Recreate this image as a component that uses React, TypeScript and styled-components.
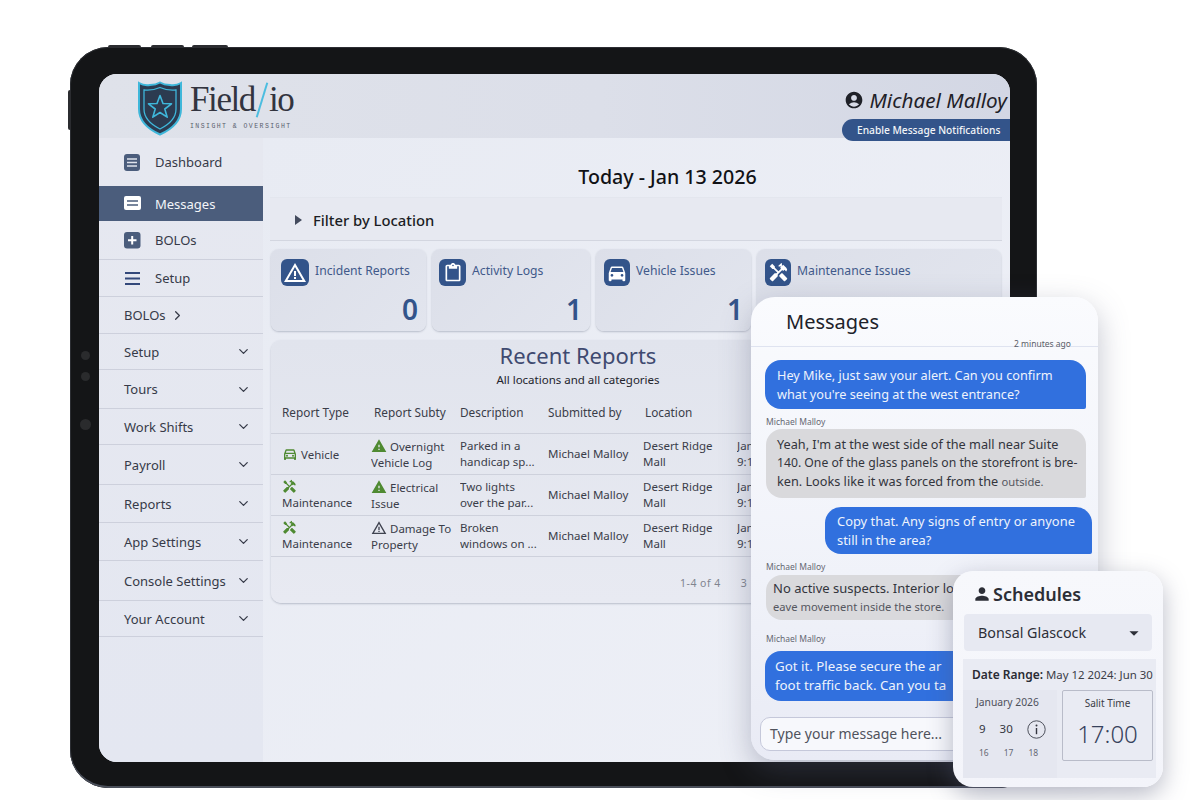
import styled, { createGlobalStyle } from "styled-components";
import { ChevronDown, ChevronRight } from "lucide-react";
import {
  MdAccountCircle,
  MdArrowDropDown,
  MdContentPaste,
  MdDirectionsCar,
  MdHandyman,
  MdOutlineDirectionsCar,
  MdPerson,
  MdWarning,
  MdWarningAmber,
} from "react-icons/md";

const FONT = `"Noto Sans", "Open Sans", sans-serif`;

const GlobalStyle = createGlobalStyle`
  html, body {
    margin: 0;
    background: #fff;
    font-family: ${FONT};
  }
  * { box-sizing: border-box; }
`;

const Stage = styled.div`
  position: relative;
  width: 1200px;
  height: 800px;
  padding: 47px 0 0 70px;
  overflow: hidden;
  background: #fff;
`;

const Tablet = styled.div`
  position: relative;
  width: 967px;
  height: 741px;
  padding: 27px 27px 26px 29px;
  border-radius: 38px;
  background: #141517;
  box-shadow: inset 0 -2px 0 #4a4f5a, inset 0 0 0 1px #2c2e33;
`;

const TopButton = styled.span<{ $left: number; $width: number }>`
  position: absolute;
  top: -2px;
  left: ${({ $left }) => $left}px;
  width: ${({ $width }) => $width}px;
  height: 3px;
  border-radius: 2px 2px 0 0;
  background: #2b2c30;
`;

const SideButton = styled.span`
  position: absolute;
  top: 43px;
  left: -2px;
  width: 3px;
  height: 40px;
  border-radius: 2px 0 0 2px;
  background: #2b2c30;
`;

const Lens = styled.span<{ $top: number; $size: number }>`
  position: absolute;
  top: ${({ $top }) => $top}px;
  left: 15px;
  width: ${({ $size }) => $size}px;
  height: ${({ $size }) => $size}px;
  margin-left: ${({ $size }) => -$size / 2}px;
  border-radius: 50%;
  background: #2a2b2d;
`;

const Screen = styled.div`
  display: flex;
  flex-direction: column;
  width: 911px;
  height: 688px;
  border-radius: 18px;
  overflow: hidden;
  background: #eceef6;
`;

const Header = styled.header`
  display: flex;
  justify-content: space-between;
  height: 64px;
  flex-shrink: 0;
  background: linear-gradient(90deg, #dfe2ea 0%, #dcdfe9 55%, #d3d7e4 100%);
`;

const Brand = styled.div`
  display: flex;
  gap: 7px;
  padding: 7px 0 0 38px;
`;

const BrandText = styled.div`
  display: flex;
  flex-direction: column;
`;

const Wordmark = styled.div`
  display: flex;
  align-items: center;
  height: 38px;
  font-family: "Liberation Serif", serif;
  font-size: 35px;
  line-height: 38px;
  letter-spacing: -1.4px;
  color: #32343f;
`;

const Slash = styled.span`
  display: block;
  width: 2px;
  height: 36px;
  margin: 0 6px 0 6px;
  background: #4cbde0;
  transform: rotate(17deg);
`;

const Tagline = styled.div`
  margin-top: 3px;
  font-family: "Liberation Mono", monospace;
  font-size: 6.5px;
  line-height: 9px;
  letter-spacing: 1.45px;
  color: #5a5f6e;
  white-space: nowrap;
`;

const Account = styled.div`
  display: flex;
  flex-direction: column;
  align-items: flex-end;
  position: relative;
  z-index: 2;
`;

const UserName = styled.div`
  display: flex;
  align-items: center;
  gap: 5px;
  height: 26px;
  margin-top: 13px;
  padding-right: 3px;
  font-size: 20.7px;
  font-style: italic;
  color: #1f2128;
  white-space: nowrap;
`;

const NotifyPill = styled.div`
  width: 168px;
  height: 22px;
  margin-top: 6px;
  padding-left: 15px;
  border-radius: 11px 0 0 11px;
  background: #33548a;
  color: #f2f4f8;
  font-size: 10.2px;
  font-weight: 500;
  line-height: 22px;
  white-space: nowrap;
`;

const Body = styled.div`
  display: flex;
  flex: 1;
  min-height: 0;
`;

const Sidebar = styled.nav`
  width: 164px;
  flex-shrink: 0;
  background: linear-gradient(180deg, #e6e8f0 0%, #e4e7f1 100%);
`;

const NavRow = styled.div<{ $h: number; $active?: boolean; $line?: boolean }>`
  display: flex;
  align-items: center;
  height: ${({ $h }) => $h}px;
  padding: 0 12px 0 25px;
  font-size: 13px;
  color: ${({ $active }) => ($active ? "#f3f5f9" : "#363a48")};
  background: ${({ $active }) => ($active ? "#4b5d7c" : "transparent")};
  border-bottom: ${({ $line }) => ($line ? "1px solid #cdd0dc" : "none")};
  white-space: nowrap;
`;

const NavIcon = styled.svg`
  width: 17px;
  height: 17px;
  margin-right: 14px;
  flex-shrink: 0;
`;

const NavLabel = styled.span`
  flex: 1;
`;

const InlineLabel = styled.span`
  margin-right: 4px;
`;

const Main = styled.main`
  flex: 1;
  min-width: 0;
  padding: 0 8px;
  background: linear-gradient(135deg, #e8ebf3 0%, #eef0f7 100%);
`;

const DateTitle = styled.h1`
  height: 59px;
  margin: 0;
  padding: 25px 0 0 62px;
  font-size: 19.6px;
  font-weight: 500;
  line-height: 28px;
  text-align: center;
  color: #111216;
`;

const FilterBar = styled.div`
  display: flex;
  align-items: center;
  height: 44px;
  padding: 1px 0 0 25px;
  margin-left: -1px;
  border-top: 1px solid #e3e6ee;
  border-bottom: 1px solid #d3d6e0;
  background: #e7e9f1;
  font-size: 14.8px;
  font-weight: 500;
  color: #1b1d24;
`;

const Caret = styled.span`
  width: 0;
  height: 0;
  margin-right: 11px;
  border-top: 5.5px solid transparent;
  border-bottom: 5.5px solid transparent;
  border-left: 7px solid #444b5e;
`;

const CardGrid = styled.div`
  display: grid;
  grid-template-columns: 155px 158px 155px 244px;
  gap: 6px;
  margin-top: 8px;
`;

const Card = styled.div<{ $inset: number }>`
  position: relative;
  height: 82px;
  padding: 10px ${({ $inset }) => $inset}px;
  border-radius: 8px;
  background: linear-gradient(135deg, #dcdfe9, #e2e5ee);
  box-shadow: 0 1px 2px rgba(90, 96, 120, 0.35);
`;

const CardHead = styled.div`
  display: flex;
  gap: 6px;
`;

const CardIcon = styled.div<{ $w: number }>`
  display: flex;
  align-items: center;
  justify-content: center;
  width: ${({ $w }) => $w}px;
  height: 27px;
  border-radius: 6px;
  background: #33548a;
  color: #fff;
`;

const CardTitle = styled.div`
  padding-top: 3px;
  font-size: 12.2px;
  line-height: 18px;
  color: #41598a;
  white-space: nowrap;
`;

const CardValue = styled.div`
  position: absolute;
  right: 8px;
  bottom: 4px;
  font-size: 28px;
  font-weight: 600;
  line-height: 36px;
  color: #33548a;
`;

const ReportsPanel = styled.section`
  margin-top: 9px;
  height: 263px;
  border-radius: 10px;
  overflow: hidden;
  background: linear-gradient(180deg, #e1e4ed 0%, #e8eaf2 100%);
  box-shadow: 0 1px 2px rgba(90, 96, 120, 0.35);
`;

const ReportsHead = styled.div`
  padding: 2px 117px 0 0;
  text-align: center;
`;

const ReportsTitle = styled.h2`
  margin: 0 0 2px;
  font-size: 22px;
  font-weight: 400;
  line-height: 26px;
  color: #3f4a70;
`;

const ReportsSub = styled.div`
  font-size: 11.5px;
  line-height: 20px;
  color: #22242c;
`;

const TableRow = styled.div<{ $head?: boolean }>`
  display: grid;
  grid-template-columns: 89px 89px 88px 95px 94px 80px;
  align-items: center;
  height: ${({ $head }) => ($head ? "44px" : "41px")};
  padding-left: 11px;
  border-bottom: 1px solid #ced1dc;
  font-size: ${({ $head }) => ($head ? "11.8px" : "11.5px")};
  line-height: 16px;
  color: #3a3d49;
  white-space: nowrap;
`;

const CellIcon = styled.span<{ $color: string }>`
  display: inline-flex;
  vertical-align: -3px;
  margin-right: 3px;
  color: ${({ $color }) => $color};
`;

const Cell = styled.div<{ $indent?: number }>`
  overflow: hidden;
  padding-left: ${({ $indent }) => $indent ?? 0}px;
`;

const Pager = styled.div`
  display: flex;
  gap: 20px;
  padding: 18px 0 0 409px;
  font-size: 10.5px;
  letter-spacing: 0.5px;
  line-height: 16px;
  color: #80848f;
`;

const MessagesPanel = styled.section`
  position: absolute;
  left: 751px;
  top: 297px;
  width: 347px;
  height: 463px;
  border-radius: 24px;
  overflow: hidden;
  background: linear-gradient(180deg, #fafbfe 0%, #f0f2f9 60%, #e9ebf5 100%);
  box-shadow: 0 10px 30px rgba(80, 86, 115, 0.35);
`;

const MessagesHead = styled.div`
  position: relative;
  height: 50px;
  padding: 11px 0 0 35px;
  font-size: 20px;
  line-height: 28px;
  color: #20222a;
  border-bottom: 1px solid #dfe3f0;
`;

const TimeAgo = styled.span`
  position: absolute;
  right: 27px;
  bottom: -3px;
  font-size: 8.5px;
  line-height: 10px;
  color: #5b5e68;
`;

const Thread = styled.div`
  padding: 13px 0 0 14px;
`;

const Sender = styled.div<{ $before: number; $after: number }>`
  margin: ${({ $before }) => $before}px 0 ${({ $after }) => $after}px 1px;
  font-size: 8.5px;
  line-height: 10px;
  color: #656873;
`;

const Bubble = styled.div<{
  $mine?: boolean;
  $left?: number;
  $top?: number;
  $width: number;
  $height: number;
  $inset?: number;
  $size?: number;
}>`
  display: flex;
  flex-direction: column;
  justify-content: center;
  width: ${({ $width }) => $width}px;
  height: ${({ $height }) => $height}px;
  margin: ${({ $top }) => $top ?? 0}px 0 0 ${({ $left }) => $left ?? 0}px;
  padding-left: ${({ $inset }) => $inset ?? 12}px;
  border-radius: 16px 16px 2px 16px;
  font-size: ${({ $size }) => $size ?? 12.7}px;
  line-height: 18.7px;
  white-space: nowrap;
  overflow: hidden;
  background: ${({ $mine }) => ($mine ? "#3170de" : "#d9d9dc")};
  color: ${({ $mine }) => ($mine ? "#eef3fc" : "#33353c")};
`;

const Faint = styled.span`
  font-size: 11.2px;
  color: #55575f;
`;

const Squeezed = styled.span`
  font-size: 12.2px;
`;

const Composer = styled.div`
  position: absolute;
  left: 9px;
  bottom: 9px;
  width: 320px;
  height: 34px;
  padding-left: 9px;
  border: 1px solid #c5c8da;
  border-radius: 10px;
  background: #f7f8fc;
  font-size: 14px;
  line-height: 32px;
  color: #50535d;
`;

const SchedulesPanel = styled.section`
  position: absolute;
  left: 953px;
  top: 571px;
  width: 210px;
  height: 216px;
  padding: 11px 11px 0 10px;
  border-radius: 20px;
  background: linear-gradient(180deg, #f7f8fc 0%, #f3f4fa 100%);
  box-shadow: 0 8px 24px rgba(80, 86, 115, 0.4);
`;

const SchedulesTitle = styled.h3`
  display: flex;
  align-items: center;
  gap: 1px;
  height: 24px;
  margin: 0 0 8px 9px;
  font-size: 18px;
  font-weight: 600;
  color: #2c2e36;
`;

const PersonSelect = styled.div`
  display: flex;
  align-items: center;
  justify-content: space-between;
  height: 37px;
  margin-left: 1px;
  padding: 0 7px 0 14px;
  border-radius: 4px;
  background: #e7e9f2;
  font-size: 14.3px;
  color: #2d2f38;
`;

const RangeBox = styled.div`
  width: 193px;
  height: 119px;
  margin-top: 8px;
  background: #e9ebf3;
  overflow: hidden;
`;

const RangeLine = styled.div`
  height: 31px;
  padding-left: 9px;
  font-size: 11.4px;
  line-height: 32px;
  color: #3b3d47;
  white-space: nowrap;
`;

const RangeStrong = styled.b`
  font-size: 12px;
  font-weight: 600;
  color: #2a2c34;
`;

const RangeColumns = styled.div`
  display: flex;
`;

const CalendarCol = styled.div`
  width: 94px;
  height: 88px;
  padding: 5px 0 0 13px;
  background: #e5e7f0;
  font-size: 10.3px;
  line-height: 14px;
  color: #4d505b;
`;

const DayRow = styled.div<{ $small?: boolean }>`
  display: flex;
  align-items: center;
  gap: ${({ $small }) => ($small ? "15px" : "14px")};
  height: ${({ $small }) => ($small ? "14px" : "20px")};
  margin-top: ${({ $small }) => ($small ? "7px" : "10px")};
  padding-left: 3px;
  font-size: ${({ $small }) => ($small ? "8.5px" : "11.5px")};
  color: ${({ $small }) => ($small ? "#666975" : "#34363f")};
`;

const TimeBox = styled.div`
  width: 91px;
  height: 71px;
  margin-left: 5px;
  border: 1px solid #b9bcc9;
  border-radius: 2px;
  background: #e9ebf3;
  text-align: center;
`;

const TimeLabel = styled.div`
  padding-top: 4px;
  font-size: 10px;
  line-height: 16px;
  color: #3a3c46;
`;

const TimeValue = styled.div`
  margin-top: 7px;
  font-size: 24px;
  font-weight: 300;
  line-height: 32px;
  color: #37425c;
`;

const DashIcon = () => (
  <NavIcon viewBox="0 0 17 17">
    <rect width="16" height="17" rx="3" fill="#4b5d7c" />
    <path d="M3 5h10M3 8.5h10M3 12h10" stroke="#dfe3ec" strokeWidth="1.6" />
  </NavIcon>
);

const MsgIcon = () => (
  <NavIcon viewBox="0 0 17 17">
    <rect y="1" width="17" height="14" rx="2" fill="#fff" />
    <path d="M3 6h11M3 10h11" stroke="#4b5d7c" strokeWidth="1.7" />
  </NavIcon>
);

const PlusIcon = () => (
  <NavIcon viewBox="0 0 17 17">
    <rect width="16.5" height="16.5" rx="3" fill="#4b5d7c" />
    <path d="M8.2 4v8.5M4 8.2h8.5" stroke="#fff" strokeWidth="2" />
  </NavIcon>
);

const BarsIcon = () => (
  <NavIcon viewBox="0 0 17 17">
    <path d="M1 3h15M1 8.5h15M1 14h15" stroke="#33487a" strokeWidth="2" />
  </NavIcon>
);

const InfoIcon = () => (
  <svg width="19" height="19" viewBox="0 0 19 19">
    <circle cx="9.5" cy="9.5" r="8.7" fill="none" stroke="#4d505b" strokeWidth="1" />
    <circle cx="9.5" cy="5.6" r="1" fill="#34363f" />
    <path d="M9.5 8v6.2" stroke="#34363f" strokeWidth="1.4" />
  </svg>
);

const ShieldLogo = () => (
  <svg width="46" height="55" viewBox="0 0 46 55">
    <path
      d="M2 2 Q7 5 13 4 Q19 4 23 1.5 Q27 4 33 4 Q39 5 44 2 L44 28 Q44 44 23 53.5 Q2 44 2 28 Z"
      fill="#2c3b50"
      stroke="#3fb7da"
      strokeWidth="2"
    />
    <path
      d="M7 9 Q15 10 23 6.5 Q31 10 39 9 L39 28 Q39 40 23 48 Q7 40 7 28 Z"
      fill="none"
      stroke="#3fb7da"
      strokeWidth="1.3"
    />
    <path
      d="M23 14.5 L26 22.5 L34.5 22.8 L27.8 28 L30.2 36.2 L23 31.5 L15.8 36.2 L18.2 28 L11.5 22.8 L20 22.5 Z"
      fill="none"
      stroke="#3fb7da"
      strokeWidth="1.6"
      strokeLinejoin="round"
    />
  </svg>
);

const menuRows = [
  { label: "Setup", h: 36 },
  { label: "Tours", h: 39 },
  { label: "Work Shifts", h: 36 },
  { label: "Payroll", h: 40 },
  { label: "Reports", h: 38 },
  { label: "App Settings", h: 38 },
  { label: "Console Settings", h: 40 },
  { label: "Your Account", h: 36 },
];

const GREEN = "#4f8a32";

const reportRows = [
  {
    type: (
      <>
        <CellIcon $color={GREEN}>
          <MdOutlineDirectionsCar size={16} />
        </CellIcon>
        Vehicle
      </>
    ),
    sub: (
      <>
        <CellIcon $color={GREEN}>
          <MdWarning size={16} />
        </CellIcon>
        Overnight
        <br />
        Vehicle Log
      </>
    ),
    desc: ["Parked in a", "handicap sp..."],
  },
  {
    type: (
      <>
        <CellIcon $color={GREEN}>
          <MdHandyman size={15} />
        </CellIcon>
        <br />
        Maintenance
      </>
    ),
    sub: (
      <>
        <CellIcon $color={GREEN}>
          <MdWarning size={16} />
        </CellIcon>
        Electrical
        <br />
        Issue
      </>
    ),
    desc: ["Two lights", "over the par..."],
  },
  {
    type: (
      <>
        <CellIcon $color={GREEN}>
          <MdHandyman size={15} />
        </CellIcon>
        <br />
        Maintenance
      </>
    ),
    sub: (
      <>
        <CellIcon $color="#3f4350">
          <MdWarningAmber size={16} />
        </CellIcon>
        Damage To
        <br />
        Property
      </>
    ),
    desc: ["Broken", "windows on ..."],
  },
];

export default function App() {
  return (
    <>
      <GlobalStyle />
      <Stage>
        <Tablet>
          <TopButton $left={38} $width={33} />
          <TopButton $left={81} $width={33} />
          <TopButton $left={122} $width={36} />
          <SideButton />
          <Lens $top={304} $size={9} />
          <Lens $top={325} $size={9} />
          <Lens $top={372} $size={11} />
          <Screen>
            <Header>
              <Brand>
                <ShieldLogo />
                <BrandText>
                  <Wordmark>
                    Field
                    <Slash />
                    io
                  </Wordmark>
                  <Tagline>INSIGHT &amp; OVERSIGHT</Tagline>
                </BrandText>
              </Brand>
              <Account>
                <UserName>
                  <MdAccountCircle size={20} />
                  Michael Malloy
                </UserName>
                <NotifyPill>Enable Message Notifications</NotifyPill>
              </Account>
            </Header>
            <Body>
              <Sidebar>
                <NavRow $h={48}>
                  <DashIcon />
                  <NavLabel>Dashboard</NavLabel>
                </NavRow>
                <NavRow $h={35} $active>
                  <MsgIcon />
                  <NavLabel>Messages</NavLabel>
                </NavRow>
                <NavRow $h={39} $line>
                  <PlusIcon />
                  <NavLabel>BOLOs</NavLabel>
                </NavRow>
                <NavRow $h={37} $line>
                  <BarsIcon />
                  <NavLabel>Setup</NavLabel>
                </NavRow>
                <NavRow $h={37} $line>
                  <InlineLabel>BOLOs</InlineLabel>
                  <ChevronRight size={15} />
                </NavRow>
                {menuRows.map((row) => (
                  <NavRow key={row.label} $h={row.h} $line>
                    <NavLabel>{row.label}</NavLabel>
                    <ChevronDown size={15} />
                  </NavRow>
                ))}
              </Sidebar>
              <Main>
                <DateTitle>Today - Jan 13 2026</DateTitle>
                <FilterBar>
                  <Caret />
                  Filter by Location
                </FilterBar>
                <CardGrid>
                  <Card $inset={10}>
                    <CardHead>
                      <CardIcon $w={28}>
                        <MdWarningAmber size={24} />
                      </CardIcon>
                      <CardTitle>Incident Reports</CardTitle>
                    </CardHead>
                    <CardValue>0</CardValue>
                  </Card>
                  <Card $inset={7}>
                    <CardHead>
                      <CardIcon $w={27}>
                        <MdContentPaste size={20} />
                      </CardIcon>
                      <CardTitle>Activity Logs</CardTitle>
                    </CardHead>
                    <CardValue>1</CardValue>
                  </Card>
                  <Card $inset={8}>
                    <CardHead>
                      <CardIcon $w={26}>
                        <MdDirectionsCar size={22} />
                      </CardIcon>
                      <CardTitle>Vehicle Issues</CardTitle>
                    </CardHead>
                    <CardValue>1</CardValue>
                  </Card>
                  <Card $inset={8}>
                    <CardHead>
                      <CardIcon $w={26}>
                        <MdHandyman size={21} />
                      </CardIcon>
                      <CardTitle>Maintenance Issues</CardTitle>
                    </CardHead>
                  </Card>
                </CardGrid>
                <ReportsPanel>
                  <ReportsHead>
                    <ReportsTitle>Recent Reports</ReportsTitle>
                    <ReportsSub>All locations and all categories</ReportsSub>
                  </ReportsHead>
                  <TableRow $head>
                    <Cell>Report Type</Cell>
                    <Cell $indent={3}>Report Subty</Cell>
                    <Cell>Description</Cell>
                    <Cell>Submitted by</Cell>
                    <Cell $indent={2}>Location</Cell>
                    <Cell />
                  </TableRow>
                  {reportRows.map((row, i) => (
                    <TableRow key={i}>
                      <Cell>{row.type}</Cell>
                      <Cell>{row.sub}</Cell>
                      <Cell>
                        {row.desc[0]}
                        <br />
                        {row.desc[1]}
                      </Cell>
                      <Cell>Michael Malloy</Cell>
                      <Cell>
                        Desert Ridge
                        <br />
                        Mall
                      </Cell>
                      <Cell>
                        Jan 13
                        <br />
                        9:15 AM
                      </Cell>
                    </TableRow>
                  ))}
                  <Pager>
                    <span>1-4 of 4</span>
                    <span>3</span>
                  </Pager>
                </ReportsPanel>
              </Main>
            </Body>
          </Screen>
        </Tablet>

        <MessagesPanel>
          <MessagesHead>
            Messages
            <TimeAgo>2 minutes ago</TimeAgo>
          </MessagesHead>
          <Thread>
            <Bubble $mine $width={321} $height={49}>
              <span>Hey Mike, just saw your alert. Can you confirm</span>
              <span>what you're seeing at the west entrance?</span>
            </Bubble>
            <Sender $before={8} $after={2}>
              Michael Malloy
            </Sender>
            <Bubble $width={320} $height={69} $left={1} $inset={11}>
              <span>Yeah, I'm at the west side of the mall near Suite</span>
              <Squeezed>140. One of the glass panels on the storefront is bre-</Squeezed>
              <span>
                ken. Looks like it was forced from the <Faint>outside.</Faint>
              </span>
            </Bubble>
            <Bubble $mine $width={267} $height={47} $left={60} $top={9} $size={12.9}>
              <span>Copy that. Any signs of entry or anyone</span>
              <span>still in the area?</span>
            </Bubble>
            <Sender $before={8} $after={3}>
              Michael Malloy
            </Sender>
            <Bubble $width={320} $height={45} $left={1} $inset={7} $size={13}>
              <span>No active suspects. Interior lo</span>
              <Faint>eave movement inside the store.</Faint>
            </Bubble>
            <Sender $before={14} $after={7}>
              Michael Malloy
            </Sender>
            <Bubble $mine $width={320} $height={50} $inset={10} $size={13.3}>
              <span>Got it. Please secure the ar</span>
              <span>foot traffic back. Can you ta</span>
            </Bubble>
          </Thread>
          <Composer>Type your message here...</Composer>
        </MessagesPanel>

        <SchedulesPanel>
          <SchedulesTitle>
            <MdPerson size={20} />
            Schedules
          </SchedulesTitle>
          <PersonSelect>
            Bonsal Glascock
            <MdArrowDropDown size={22} />
          </PersonSelect>
          <RangeBox>
            <RangeLine>
              <RangeStrong>Date Range:</RangeStrong> May 12 2024: Jun 30
            </RangeLine>
            <RangeColumns>
              <CalendarCol>
                January 2026
                <DayRow>
                  <span>9</span>
                  <span>30</span>
                  <InfoIcon />
                </DayRow>
                <DayRow $small>
                  <span>16</span>
                  <span>17</span>
                  <span>18</span>
                </DayRow>
              </CalendarCol>
              <TimeBox>
                <TimeLabel>Salit Time</TimeLabel>
                <TimeValue>17:00</TimeValue>
              </TimeBox>
            </RangeColumns>
          </RangeBox>
        </SchedulesPanel>
      </Stage>
    </>
  );
}
